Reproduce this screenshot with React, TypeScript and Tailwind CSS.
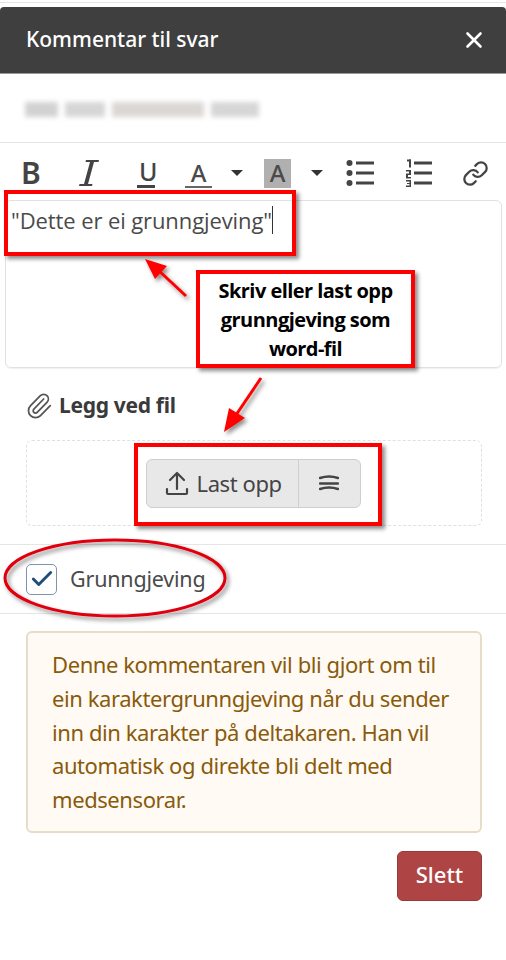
import React from "react";
import { Link, Paperclip, X, Check } from "lucide-react";

const font = { fontFamily: '"Noto Sans", sans-serif' };

function Caret() {
  return <div className="w-0 h-0 border-l-[6.5px] border-r-[6.5px] border-t-[6px] border-l-transparent border-r-transparent border-t-[#333]" />;
}

function ToolbarA({ highlighted }: { highlighted?: boolean }) {
  return (
    <div className={`w-[27px] h-[29px] flex flex-col items-center ${highlighted ? "bg-[#b0b0b0] justify-center" : "justify-end"}`}>
      <span className="text-[24px] leading-[24px] font-medium text-[#4a4a4a] font-['Noto_Sans']">A</span>
      {!highlighted && <div className="w-[27px] h-[2px] bg-[#666] mt-[1px]" />}
    </div>
  );
}

function Italic() {
  return (
    <svg width="20" height="28" viewBox="0 0 20 28" fill="#444">
      <path d="M7 1h13l-.5 2h-4.500L9 25h4.500l-.5 2H0l.5-2H5l6-22H6.500z" />
    </svg>
  );
}

function BulletList() {
  return (
    <svg width="28" height="28" viewBox="0 0 28 28" fill="#444">
      <circle cx="3.5" cy="4" r="3" /><circle cx="3.5" cy="14" r="3" /><circle cx="3.5" cy="24" r="3" />
      <rect x="10" y="2.5" width="18" height="3" /><rect x="10" y="12.5" width="18" height="3" /><rect x="10" y="22.5" width="18" height="3" />
    </svg>
  );
}

function NumberList() {
  return (
    <svg width="27" height="28" viewBox="0 0 27 28" fill="#444">
      <rect x="2" y="0.5" width="4" height="2" /><rect x="4" y="0.5" width="2" height="8" />
      <path d="M1 11h5v5H3v2h3v1.5H1v-5h3v-2H1z" />
      <path d="M1 21h5v7H1v-1.5h3.500v-1.500H2v-1h2.500V22.500H1z" />
      <rect x="9" y="2.500" width="18" height="3" /><rect x="9" y="12.500" width="18" height="3" /><rect x="9" y="22.500" width="18" height="3" />
    </svg>
  );
}

function Annotation({ className, children }: { className: string; children?: React.ReactNode }) {
  return <div className={`absolute border-[4px] border-[#ff0000] shadow-[3px_3px_4px_rgba(0,0,0,0.45)] ${className}`}>{children}</div>;
}

export default function App() {
  return (
    <div className="relative w-[506px] h-[960px] bg-white overflow-hidden pt-[7px]" style={font}>
      <div className="absolute left-0 right-0 top-[2px] h-px bg-[#e6e6e6]" />
      <header className="h-[67px] bg-[#3f3f3f] rounded-t-[4px] flex items-center justify-between pl-[26px] pr-[19px] border-b border-[#999]">
        <h1 className="text-[21px] font-medium text-white">Kommentar til svar</h1>
        <X size={26} strokeWidth={2.4} className="text-white" />
      </header>
      <div className="h-[69px] border-b border-[#e5e5e5] pl-[25px] flex items-center pt-[3px]">
        <div className="flex gap-[7px] blur-[2.5px]">
          <div className="w-[33px] h-[15px] bg-[#d2d2d2]" />
          <div className="w-[40px] h-[15px] bg-[#d6d6d6]" />
          <div className="w-[92px] h-[15px] bg-[#dbd7d5]" />
          <div className="w-[48px] h-[15px] bg-[#d6d6d6]" />
        </div>
      </div>
      <div className="h-[57px] relative flex items-start pt-[15px] text-[#444]">
        <div className="flex items-center h-[30px] w-full pl-[21px]">
          <span className="w-[58px] text-[30px] leading-[30px] font-semibold text-[#444]">B</span>
          <div className="w-[58px]"><Italic /></div>
          <div className="w-[48px] flex flex-col items-start">
            <span className="text-[25px] leading-[24px] text-[#444] font-medium pl-[2px]">U</span>
            <div className="w-[18px] h-[3px] bg-[#444] mt-[2px]" />
          </div>
          <ToolbarA />
          <div className="ml-[19px] mr-[21px]"><Caret /></div>
          <ToolbarA highlighted />
          <div className="ml-[20px] mr-[23px]"><Caret /></div>
          <div className="mr-[31px]"><BulletList /></div>
          <div className="mr-[30px]"><NumberList /></div>
          <Link size={27} strokeWidth={2} className="text-[#444]" />
        </div>
      </div>
      <div className="ml-[5px] h-[168px] w-[497px] border border-[#e2e2e2] rounded-[6px] shadow-[0_1px_1px_rgba(0,0,0,0.06)] relative">
        <div className="pl-[5px] pt-[3px] flex items-start h-[32px]">
          <span className="text-[22px] leading-[32px] text-[#4a4a4a] tracking-[-0.1px] font-['Open_Sans']">"Dette er ei grunngjeving"</span>
          <span className="w-px h-[28px] bg-[#333] mt-[2px]" />
        </div>
      </div>
      <div className="h-[72px] pl-[25px] flex items-center gap-[6px] pt-[3px]">
        <Paperclip size={28} strokeWidth={1.5} className="text-[#555]" />
        <span className="text-[21px] font-bold text-[#3a3a3a] tracking-[-0.3px]">Legg ved fil</span>
      </div>
      <div className="ml-[26px] w-[456px] h-[86px] border border-dashed border-[#e0e0e0] rounded-[6px] flex items-center justify-center">
        <div className="w-[215px] h-[49px] mr-[2px] flex bg-[#e8e8e8] border border-[#cfcfcf] rounded-[6px]">
          <div className="flex items-center gap-[8px] w-[152px] border-r border-[#cfcfcf] pl-[18px]">
            <svg width="24" height="26" viewBox="0 0 24 26" fill="none" stroke="#444" strokeWidth="2.200" strokeLinecap="round" strokeLinejoin="round">
              <path d="M12 19V3M5 10l7-7 7 7" />
              <path d="M2 19v4a1 1 0 0 0 1 1h18a1 1 0 0 0 1-1v-4" />
            </svg>
            <span className="text-[22px] text-[#444] tracking-[-0.4px] pt-[1px]">Last opp</span>
          </div>
          <div className="flex-1 flex items-center justify-center">
            <svg width="20" height="18" viewBox="0 0 20 18" fill="none" stroke="#444" strokeWidth="2.500" strokeLinecap="round">
              <path d="M1 4Q10 1 19 4" /><path d="M1 9.500h18" /><path d="M1 15Q10 12 19 15" />
            </svg>
          </div>
        </div>
      </div>
      <div className="mt-[18px] h-[70px] border-y border-[#e5e5e5] pl-[26px] flex items-center gap-[13px]">
        <div className="w-[31px] h-[31px] border border-[#7d95aa] rounded-[5px] flex items-center justify-center">
          <Check size={26} strokeWidth={2.700} className="text-[#1f4e79]" />
        </div>
        <span className="text-[21.500px] text-[#4a4a4a] tracking-[-0.2px]">Grunngjeving</span>
      </div>
      <div className="ml-[26px] w-[456px] mt-[17px] h-[202px] border-2 border-[#e6dcc8] rounded-[6px] bg-[#fffaf4] pl-[24px] pr-[20px] pt-[15px]">
        <p className="text-[22px] leading-[33.800px] text-[#8a5a0b] tracking-[-0.42px] whitespace-nowrap">
          Denne kommentaren vil bli gjort om til<br />
          ein karaktergrunngjeving når du sender<br />
          inn din karakter på deltakaren. Han vil<br />
          automatisk og direkte bli delt med<br />
          medsensorar.
        </p>
      </div>
      <div className="flex justify-end pr-[24px] mt-[18px]">
        <button className="w-[85px] h-[50px] pb-[4px] bg-[#ae4444] border border-[#96393a] rounded-[6px] text-white text-[22px] font-medium">Slett</button>
      </div>

      <Annotation className="left-[4px] top-[190px] w-[292px] h-[66px]" />
      <Annotation className="left-[196px] top-[270px] w-[219px] h-[98px] bg-white flex flex-col items-center justify-center">
        <span className="text-[20px] leading-[29px] font-bold text-black text-center tracking-[-0.55px] font-['Open_Sans'] whitespace-nowrap">Skriv eller last opp<br />grunngjeving som<br />word-fil</span>
      </Annotation>
      <Annotation className="left-[134px] top-[443px] w-[248px] h-[83px]" />

      <svg className="absolute left-0 top-0 pointer-events-none" width="506" height="960" viewBox="0 0 506 960">
        <defs>
          <filter id="s" x="-20%" y="-20%" width="140%" height="140%">
            <feDropShadow dx="2.500" dy="3" stdDeviation="2" floodColor="#000" floodOpacity="0.45" />
          </filter>
        </defs>
        <g filter="url(#s)">
          <path d="M186 296L156 268" stroke="#f00" strokeWidth="3" fill="none" />
          <path d="M145 259L167 266L155 279Z" fill="#f00" />
          <path d="M261 378L236 415" stroke="#f00" strokeWidth="3" fill="none" />
          <path d="M224 432L229 408L245 418Z" fill="#f00" />
          <ellipse cx="115" cy="578" rx="110" ry="38" fill="none" stroke="#e00010" strokeWidth="3" />
        </g>
      </svg>
    </div>
  );
}
